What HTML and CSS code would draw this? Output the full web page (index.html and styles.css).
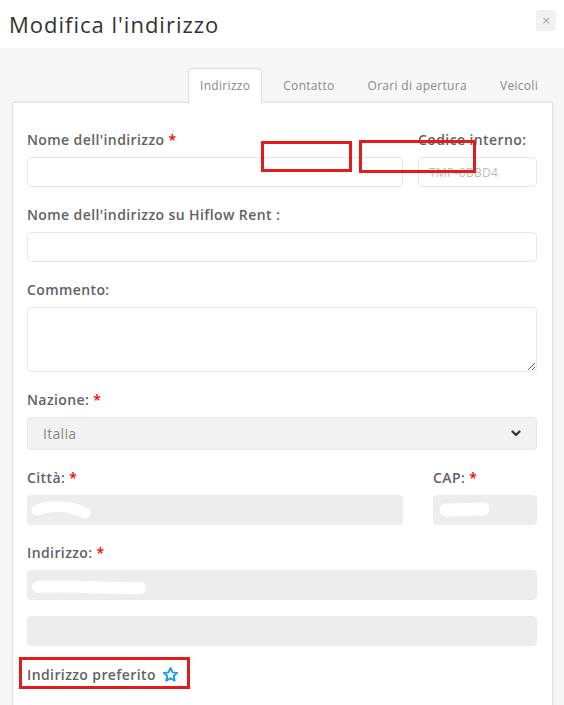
FILE: index.html
```html
<!DOCTYPE html>
<html lang="it">
<head>
<meta charset="utf-8">
<title>Modifica l'indirizzo</title>
<link rel="stylesheet" href="styles.css">
</head>
<body>
<div class="modal">
  <div class="modal-header">
    <h1 class="modal-title">Modifica l'indirizzo</h1>
    <button class="close" type="button">&times;</button>
  </div>
  <div class="modal-body">
    <ul class="tabs">
      <li class="tab active">Indirizzo</li>
      <li class="tab">Contatto</li>
      <li class="tab">Orari di apertura</li>
      <li class="tab">Veicoli</li>
    </ul>
    <div class="card">
      <div class="row row-name">
        <div class="field">
          <label class="label">Nome dell'indirizzo <span class="req">*</span></label>
          <input class="input" type="text">
        </div>
        <div class="field">
          <label class="label">Codice interno:</label>
          <input class="input" type="text" placeholder="TMP-0BBD4">
        </div>
        <span class="mark mark-a"></span>
        <span class="mark mark-b"></span>
      </div>
      <div class="field">
        <label class="label">Nome dell'indirizzo su Hiflow Rent :</label>
        <input class="input" type="text">
      </div>
      <div class="field">
        <label class="label">Commento:</label>
        <textarea class="input textarea"></textarea>
      </div>
      <div class="field">
        <label class="label">Nazione: <span class="req">*</span></label>
        <div class="select">
          <span>Italia</span>
          <svg class="chevron" width="10" height="7" viewBox="0 0 10 7"><path d="M1.5 1.5 L5 5 L8.5 1.5" fill="none" stroke="#333" stroke-width="2.2" stroke-linecap="round" stroke-linejoin="round"/></svg>
        </div>
      </div>
      <div class="row row-city">
        <div class="field">
          <label class="label">Città: <span class="req">*</span></label>
          <div class="input disabled">
            <svg class="blot" width="64" height="26" viewBox="0 0 64 26"><path d="M7 12 C 20 7, 40 7, 55 15" fill="none" stroke="#fff" stroke-width="11" stroke-linecap="round"/></svg>
          </div>
        </div>
        <div class="field">
          <label class="label">CAP: <span class="req">*</span></label>
          <div class="input disabled">
            <svg class="blot blot-cap" width="52" height="20" viewBox="0 0 52 20"><path d="M7 10 L 44 9" fill="none" stroke="#fff" stroke-width="13" stroke-linecap="round"/></svg>
          </div>
        </div>
      </div>
      <div class="field">
        <label class="label">Indirizzo: <span class="req">*</span></label>
        <div class="input disabled">
          <svg class="blot blot-addr" width="120" height="22" viewBox="0 0 120 22"><path d="M7 11 C 40 9, 80 13, 109 12" fill="none" stroke="#fff" stroke-width="12" stroke-linecap="round"/></svg>
        </div>
        <div class="input disabled second"></div>
      </div>
      <div class="favorite">
        <span class="fav-label">Indirizzo preferito</span>
        <svg class="star" width="17" height="17" viewBox="0 0 24 24"><path d="M12 2.8 L14.8 8.9 L21.4 9.6 L16.5 14.1 L17.9 20.7 L12 17.3 L6.1 20.7 L7.5 14.1 L2.6 9.6 L9.2 8.9 Z" fill="none" stroke="#1a9be6" stroke-width="2.6" stroke-linejoin="round"/></svg>
        <span class="mark mark-c"></span>
      </div>
    </div>
  </div>
</div>
</body>
</html>
```
FILE: styles.css
```css
* { box-sizing: border-box; }

html, body {
  margin: 0;
  padding: 0;
  background: #f7f7f7;
  font-family: "Open Sans", "Noto Sans", sans-serif;
  color: #555;
}

.modal-header {
  height: 48px;
  background: #fff;
  display: flex;
  align-items: center;
  justify-content: space-between;
  padding: 0 8px 0 9px;
}

.modal-title {
  margin: 0;
  font-size: 22px;
  font-weight: 400;
  color: #333;
  letter-spacing: 1px;
}

.close {
  width: 20px;
  height: 21px;
  border: 0;
  border-radius: 3px;
  background: #f1f1f1;
  color: #aaa;
  font-size: 11px;
  line-height: 21px;
  padding: 0;
  margin-top: -7px;
  font-family: "DejaVu Sans", sans-serif;
}

.modal-body {
  padding: 20px 11px 0 12px;
}

.tabs {
  list-style: none;
  margin: 0;
  padding: 0 3px 0 0;
  display: flex;
  justify-content: flex-end;
  height: 34px;
}

.tab {
  padding: 0 11px;
  height: 34px;
  line-height: 34px;
  font-size: 12px;
  letter-spacing: 0.3px;
  color: #888;
  border: 1px solid transparent;
  border-bottom: 0;
  border-radius: 4px 4px 0 0;
  margin-left: 9px;
}

.tab.active {
  background: #fff;
  border-color: #ddd;
  position: relative;
  z-index: 1;
  height: 35px;
}

.card {
  background: #fff;
  border: 1px solid #e2e2e2;
  box-shadow: 0 0 3px rgba(0, 0, 0, 0.08);
  padding: 28px 15px 30px 14px;
  min-height: 640px;
}

.row {
  display: grid;
  gap: 15px;
  position: relative;
}

.row-name { grid-template-columns: 376px 1fr; }
.row-city { grid-template-columns: 376px 1fr; gap: 30px; }

.field {
  margin-bottom: 19px;
}

.label {
  display: block;
  font-size: 14px;
  font-weight: 600;
  letter-spacing: 0.4px;
  line-height: 18px;
  margin-bottom: 8px;
  color: #626262;
}

.req { color: #f00; }

.input {
  display: block;
  width: 100%;
  height: 30px;
  border: 1px solid #e6e6e6;
  border-radius: 4px;
  background: #fff;
  font-family: inherit;
  font-size: 12px;
  letter-spacing: 0.3px;
  padding: 0 10px;
  position: relative;
}

.input::placeholder { color: #bbb; }

.textarea {
  height: 65px;
  resize: vertical;
}

.select {
  height: 33px;
  border: 1px solid #e8e8e8;
  border-radius: 4px;
  background: #f2f2f2;
  display: flex;
  align-items: center;
  justify-content: space-between;
  padding: 0 15px 0 15px;
  font-size: 14px;
  letter-spacing: 0.3px;
  color: #888;
}

.disabled {
  background: #ededed;
  border-color: #ebebeb;
}

.second { margin-top: 16px; }

.blot {
  position: absolute;
  left: 2px;
  top: 2px;
}

.blot-cap { left: 5px; top: 4px; }
.blot-addr { left: 3px; top: 5px; }

.favorite {
  position: relative;
  display: flex;
  align-items: center;
  gap: 6px;
  margin-top: 1px;
  height: 18px;
}

.fav-label {
  font-size: 14px;
  font-weight: 600;
  letter-spacing: 0.4px;
  color: #626262;
}

.mark {
  position: absolute;
  border: 3px solid #e21b1b;
}

.mark-a { left: 234px; top: 10px; width: 91px; height: 31px; }
.mark-b { left: 332px; top: 9px; width: 117px; height: 33px; }
.mark-c { left: -8px; top: -8px; width: 171px; height: 32px; }
```
